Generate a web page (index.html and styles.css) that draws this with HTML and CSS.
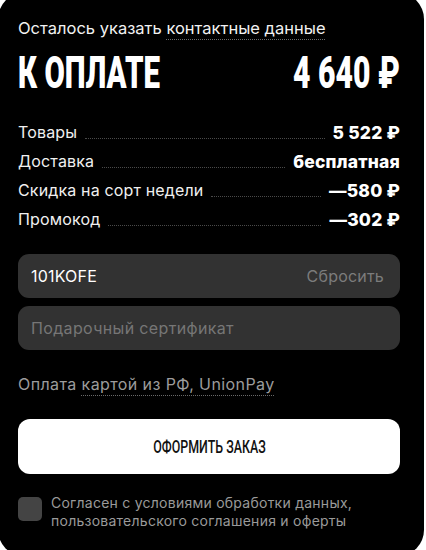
FILE: index.html
```html
<!DOCTYPE html>
<html lang="ru">
<head>
<meta charset="utf-8">
<link rel="stylesheet" href="styles.css">
</head>
<body>
<div class="panel">
  <p class="notice">Осталось указать <span class="link">контактные данные</span></p>
  <div class="total">
    <span class="total-label">К ОПЛАТЕ</span>
    <span class="total-sum">4 640 ₽</span>
  </div>
  <div class="rows">
    <div class="row"><span class="row-label">Товары</span><span class="dots"></span><span class="row-value">5 522 ₽</span></div>
    <div class="row"><span class="row-label">Доставка</span><span class="dots"></span><span class="row-value">бесплатная</span></div>
    <div class="row"><span class="row-label">Скидка на сорт недели</span><span class="dots"></span><span class="row-value">—580 ₽</span></div>
    <div class="row"><span class="row-label">Промокод</span><span class="dots"></span><span class="row-value">—302 ₽</span></div>
  </div>
  <div class="field">
    <span class="field-value">101KOFE</span>
    <span class="field-action">Сбросить</span>
  </div>
  <div class="field field-empty">
    <span class="field-placeholder">Подарочный сертификат</span>
  </div>
  <p class="pay">Оплата <span class="link">картой из РФ, UnionPay</span></p>
  <button class="submit"><span class="submit-text">ОФОРМИТЬ ЗАКАЗ</span></button>
  <label class="agree">
    <span class="box"></span>
    <span class="agree-text">Согласен с условиями обработки данных, пользовательского соглашения и оферты</span>
  </label>
</div>
</body>
</html>
```
FILE: styles.css
```css
html, body {
  margin: 0;
  padding: 0;
  background: #ffffff;
  overflow: hidden;
}
body {
  font-family: "Inter", "Noto Sans", sans-serif;
  color: #ffffff;
}
.panel {
  margin: -7px 0 0 -2px;
  width: 426px;
  height: 563px;
  box-sizing: border-box;
  background: #000000;
  border-radius: 26px;
  padding: 25px 24px 0 20px;
}
.notice {
  margin: 0;
  font-size: 16.5px;
  line-height: 20px;
  color: #f2f2f2;
}
.link {
  text-decoration: underline dotted #6a6a6a;
  text-underline-offset: 5px;
  text-decoration-thickness: 1px;
}
.total {
  margin-top: 13px;
  display: flex;
  justify-content: space-between;
  height: 44px;
}
.total-label, .total-sum {
  display: inline-block;
  font-family: "Roboto", sans-serif;
  font-weight: 900;
  font-size: 44px;
  line-height: 44px;
  transform: scaleX(0.67);
  transform-origin: left center;
  white-space: nowrap;
}
.total-sum {
  transform-origin: right center;
  transform: scaleX(0.685);
}
.rows {
  margin-top: 23px;
}
.row {
  display: flex;
  align-items: flex-end;
  height: 29px;
  font-size: 16px;
  line-height: 29px;
  letter-spacing: 0.15px;
}
.row-label {
  color: #f0f0f0;
}
.dots {
  flex: 1;
  margin: 0 8px 8px 8px;
  border-bottom: 1px dotted #4a4a4a;
}
.row-value {
  font-weight: 800;
  font-size: 17.5px;
  letter-spacing: 0.2px;
}
.field {
  margin-top: 20px;
  height: 44px;
  border-radius: 11px;
  background: #323232;
  display: flex;
  align-items: center;
  justify-content: space-between;
  padding: 0 16px 0 13px;
  font-size: 16px;
}
.field-empty {
  margin-top: 8px;
}
.field-value {
  color: #ffffff;
  letter-spacing: 0.2px;
}
.field-action {
  color: #7c7c7c;
  letter-spacing: 0.2px;
}
.field-placeholder {
  color: #767676;
  letter-spacing: 0.35px;
}
.pay {
  margin: 24px 0 0 0;
  font-size: 16px;
  line-height: 20px;
  letter-spacing: 0.4px;
  color: #9c9c9c;
}
.submit {
  margin-top: 25px;
  width: 100%;
  height: 55px;
  border: 0;
  border-radius: 12px;
  background: #ffffff;
  display: flex;
  align-items: center;
  justify-content: center;
  padding: 0;
}
.submit-text {
  display: inline-block;
  font-family: "Roboto", sans-serif;
  font-weight: 500;
  font-size: 18px;
  color: #111111;
  transform: scaleX(0.69);
  white-space: nowrap;
}
.agree {
  margin-top: 23px;
  display: flex;
  align-items: flex-start;
  gap: 9px;
}
.box {
  flex: none;
  width: 24px;
  height: 24px;
  border-radius: 5px;
  background: #444444;
}
.agree-text {
  margin-top: -3px;
  font-size: 14px;
  line-height: 18px;
  letter-spacing: 0.25px;
  color: #9a9a9a;
}
```
